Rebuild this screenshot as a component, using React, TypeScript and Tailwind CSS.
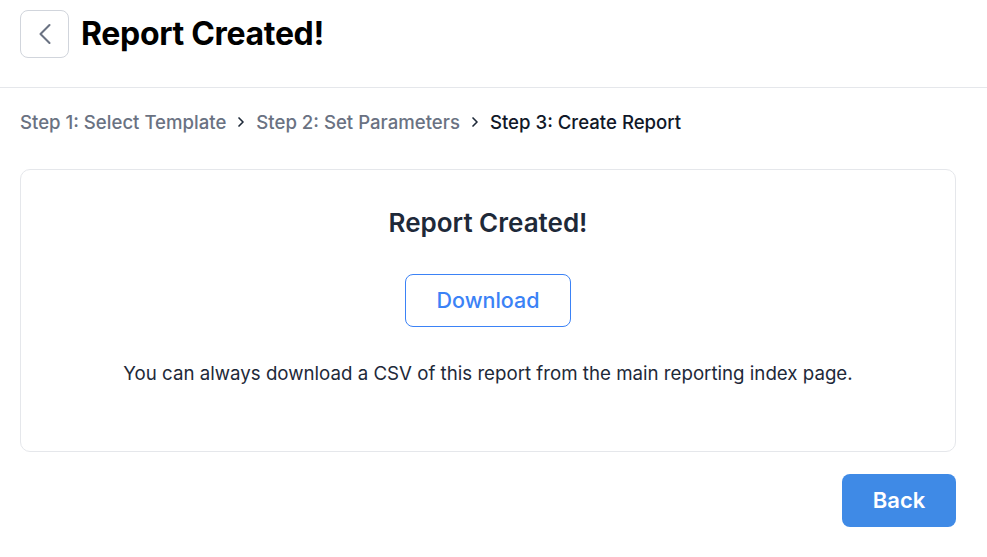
import { ChevronLeft, ChevronRight } from "lucide-react";

const steps = ["Step 1: Select Template", "Step 2: Set Parameters", "Step 3: Create Report"];

export default function App() {
  return (
    <div className="min-h-screen bg-white font-['Inter',sans-serif] text-gray-900">
      <header className="h-[88px] border-b border-gray-200 px-5 pt-[10px] flex items-start gap-3">
        <button className="w-[49px] h-[48px] rounded-lg border border-gray-300 flex items-center justify-center text-gray-500">
          <ChevronLeft className="w-9 h-9" strokeWidth={1.4} />
        </button>
        <h1 className="text-[32px] font-bold text-black leading-[48px] tracking-[-0.01em]">Report Created!</h1>
      </header>

      <div className="px-5 w-[976px]">
        <nav className="flex items-center gap-[7px] mt-[21px] text-[18.6px] leading-[26px]">
          {steps.map((s, i) => (
            <div key={s} className="flex items-center gap-[7px]">
              {i > 0 && <ChevronRight className="w-4 h-4 text-gray-800" strokeWidth={2.5} />}
              <span className={i === steps.length - 1 ? "text-gray-900 font-medium" : "text-gray-500 font-medium"}>{s}</span>
            </div>
          ))}
        </nav>

        <section className="mt-[34px] h-[283px] rounded-[10px] border border-gray-200 flex flex-col items-center pt-[36px]">
          <h2 className="text-[26px] font-semibold text-gray-800 leading-[34px]">Report Created!</h2>
          <button className="mt-[34px] w-[166px] h-[53px] rounded-lg border border-[#3b82f6] text-[#3b82f6] text-[21.5px] font-medium">
            Download
          </button>
          <p className="mt-[33px] text-[18.7px] text-gray-800 leading-[28px]">
            You can always download a CSV of this report from the main reporting index page.
          </p>
        </section>

        <div className="flex justify-end mt-[22px]">
          <button className="w-[114px] h-[53px] rounded-lg bg-[#3f8ae6] text-white text-[22px] font-semibold">
            Back
          </button>
        </div>
      </div>
    </div>
  );
}
